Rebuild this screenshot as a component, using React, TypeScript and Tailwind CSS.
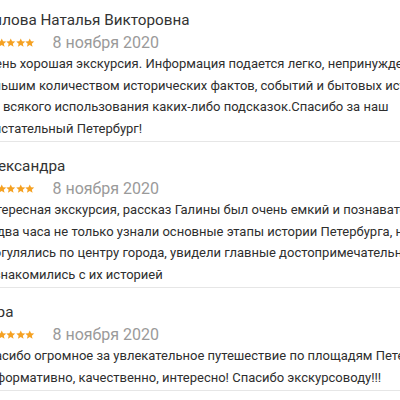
import React from 'react';

interface Review {
  id: number;
  author: string;
  date: string;
  rating: number;
  lines: string[];
}

const reviews: Review[] = [
  {
    id: 1,
    author: 'Шилова Наталья Викторовна',
    date: '8 ноября 2020',
    rating: 5,
    lines: [
      'Очень хорошая экскурсия. Информация подается легко, непринужденно, с',
      'большим количеством исторических фактов, событий и бытовых историй.',
      'без всякого использования каких-либо подсказок.Спасибо за наш',
      'блистательный Петербург!',
    ],
  },
  {
    id: 2,
    author: 'Александра',
    date: '8 ноября 2020',
    rating: 5,
    lines: [
      'Интересная экскурсия, рассказ Галины был очень емкий и познавательный.',
      'За два часа не только узнали основные этапы истории Петербурга, но и',
      'прогулялись по центру города, увидели главные достопримечательности и',
      'познакомились с их историей',
    ],
  },
  {
    id: 3,
    author: 'Вера',
    date: '8 ноября 2020',
    rating: 5,
    lines: [
      'Спасибо огромное за увлекательное путешествие по площадям Петербурга!',
      'Информативно, качественно, интересно! Спасибо экскурсоводу!!!',
    ],
  },
];

const Star = () => (
  <svg viewBox="0 0 24 24" className="w-[9.5px] h-[9.5px] fill-[#f5a122]">
    <path d="M12 1l3.3 7.3 8 .7-6.1 5.3 1.9 7.8L12 17.9l-7.1 4.2 1.9-7.8L.7 9l8-.7z" />
  </svg>
);

const ReviewItem: React.FC<{ review: Review }> = ({ review }) => (
  <div className="pt-[13px] pb-[2px] border-b border-[#e6e6e6]">
    <div className="text-[15.25px] leading-[22px] text-[#333]">{review.author}</div>
    <div className="flex items-center h-[21px] mt-px">
      <div className="flex items-center ml-2">
        {Array.from({ length: review.rating }).map((_, i) => (
          <Star key={i} />
        ))}
      </div>
      <span className="ml-[18px] text-base text-[#9a9a9a]">{review.date}</span>
    </div>
    <div className="text-[13px] leading-[21.5px] text-[#2e2e2e]">
      {review.lines.map((line, i) => (
        <div key={i}>{line}</div>
      ))}
    </div>
  </div>
);

export default function App() {
  return (
    <div className="w-[400px] h-[400px] overflow-hidden bg-white font-['Roboto',sans-serif]">
      <div className="-ml-[21px] -mt-[4px] w-[470px] whitespace-nowrap">
        {reviews.map((r) => (
          <ReviewItem key={r.id} review={r} />
        ))}
      </div>
    </div>
  );
}
